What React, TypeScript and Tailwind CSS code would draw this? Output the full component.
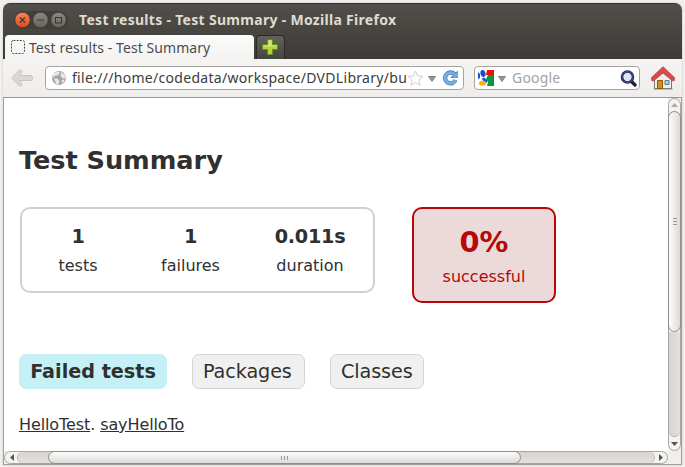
import React from 'react';

const UI = "font-['Noto_Sans',sans-serif]";

function Titlebar() {
  return (
    <div className="flex h-[31px] items-center pl-[11px]">
      <svg width="54" height="18" viewBox="0 0 54 18" className="shrink-0">
        <defs>
          <linearGradient id="close" x1="0" y1="0" x2="0" y2="1">
            <stop offset="0" stopColor="#f58763" />
            <stop offset="1" stopColor="#dd4814" />
          </linearGradient>
          <linearGradient id="btn" x1="0" y1="0" x2="0" y2="1">
            <stop offset="0" stopColor="#8b8981" />
            <stop offset="1" stopColor="#66645d" />
          </linearGradient>
        </defs>
        <rect width="54" height="18" rx="9" fill="#403f3a" />
        <circle cx="8.5" cy="9" r="7.7" fill="url(#close)" stroke="#3a3833" strokeWidth=".7" />
        <circle cx="26.5" cy="9" r="7.7" fill="url(#btn)" stroke="#3a3833" strokeWidth=".7" />
        <circle cx="44.5" cy="9" r="7.7" fill="url(#btn)" stroke="#3a3833" strokeWidth=".7" />
        <path d="M6 6.500l5 5M11 6.500l-5 5M23 9h7" stroke="#393733" strokeWidth="1.200" />
        <rect x="41.500" y="6.500" width="6" height="5.500" fill="none" stroke="#393733" />
      </svg>
      <div className={`${UI} ml-[11px] whitespace-nowrap text-[14px] font-bold leading-5 tracking-[0.3px] text-[#dfdbd2]`}>
        Test results - Test Summary - Mozilla Firefox
      </div>
    </div>
  );
}

function TabStrip() {
  return (
    <div className="flex h-[24px] items-end">
      <div className="ml-[2px] flex h-[24px] w-[249px] items-center rounded-t-[4px] bg-gradient-to-b from-[#fbfbfb] to-[#f4f3f2] pl-[6px] pt-px">
        <svg width="14" height="14" viewBox="0 0 14 14" className="mb-[2px] mr-[4px] shrink-0">
          <rect x=".5" y=".5" width="13" height="13" rx="2" fill="none" stroke="#4a4a4a" strokeDasharray="2 1.200" />
        </svg>
        <span className={`${UI} whitespace-nowrap text-[14px] leading-5 tracking-[0.07px] text-[#4c4c4c]`}>Test results - Test Summary</span>
      </div>
      <div className="ml-[2px] flex h-[24px] w-[29px] items-center justify-center rounded-t-[4px] border border-b-0 border-[#2b2a27] bg-gradient-to-b from-[#63615b] to-[#45443f] pb-[2px] pr-px">
        <svg width="16" height="16" viewBox="0 0 16 16">
          <path d="M5.500.5h5v5h5v5h-5v5h-5v-5h-5v-5h5z" fill="#b4d333" stroke="#5f9124" />
          <path d="M6.500 1.500h3v5h5v1h-13v-1h5z" fill="#d5e780" />
        </svg>
      </div>
    </div>
  );
}

function Caret() {
  return (
    <svg width="8" height="6" viewBox="0 0 8 6" className="shrink-0">
      <path d="M.5.5h7L4 5.500z" fill="#999" stroke="#707070" strokeWidth=".8" />
    </svg>
  );
}

function Toolbar() {
  return (
    <div className="flex h-[39px] items-center border-b border-[#99958f] bg-gradient-to-b from-[#f5f4f3] to-[#eeedeb] pl-[8px]">
      <svg width="22" height="18" viewBox="0 0 22 18" className="shrink-0">
        <path d="M8.300 1L.8 9l7.500 8 2.500-.8v-2L8 11.500h12.500c1.300-1 1.300-4 0-5H8l2.800-2.800v-2z" fill="#dad7d4" stroke="#c9c5c1" strokeLinejoin="round" />
      </svg>
      <div className="ml-[12px] flex h-[24px] w-[419px] shrink-0 items-center rounded-[4px] border border-[#a8a39d] bg-white pl-[5px]">
        <svg width="16" height="16" viewBox="0 0 16 16" className="shrink-0">
          <circle cx="8" cy="8" r="7" fill="#a5a5a5" />
          <path d="M2 4l4-2.400 3 1-2 2.800-3 .4L1.500 8zM10 2l4 3 1 3-3 .5L9.500 6zM3 8l4 1 1.500 2.500L7 15l-2-1.500zM10.500 10l3.500-.5-2.500 4.500z" fill="#e8e8e8" />
        </svg>
        <div className={`${UI} ml-[5px] w-[333px] shrink-0 whitespace-nowrap text-[14px] leading-5 tracking-[0.3px] text-[#3c3c3c]`}>
          file:///home/codedata/workspace/DVDLibrary/bu
        </div>
        <svg width="17" height="17" viewBox="0 0 17 17" className="ml-[2px] shrink-0">
          <path d="M8.500 1l2.100 5 5.400.4-4.100 3.500 1.300 5.400-4.700-2.900-4.700 2.900 1.300-5.400L1 6.400l5.400-.4z" fill="#fff" stroke="#cfcfcf" strokeLinejoin="round" />
        </svg>
        <div className="ml-[4px] flex pt-[2px]"><Caret /></div>
        <svg width="17" height="16" viewBox="0 0 17 16" className="ml-[6px] shrink-0">
          <path d="M12.500 4.300A5.400 5.400 0 1 0 13.500 10" fill="none" stroke="#4b88c4" strokeWidth="4.400" />
          <path d="M15.800.5v7.500H8z" fill="#4b88c4" />
          <path d="M12.500 4.300A5.400 5.400 0 1 0 13.500 10" fill="none" stroke="#78afe0" strokeWidth="2.700" />
          <path d="M15 2.500v4.700h-5z" fill="#78afe0" />
        </svg>
      </div>
      <div className="ml-[10px] flex h-[24px] w-[166px] shrink-0 items-center rounded-[4px] border border-[#a8a39d] bg-white pl-[3px]">
        <svg width="16" height="16" viewBox="0 0 16 16" className="shrink-0">
          <path d="M9 0h7v5H8z" fill="#f20c0c" />
          <path d="M10 5h6v11h-7l1-4-2-3z" fill="#0a963c" />
          <path d="M0 2l2 2v4l-2 1z" fill="#1552c4" />
          <ellipse cx="5" cy="3.500" rx="2.500" ry="3.500" fill="#1552c4" transform="rotate(-15 5 3.500)" />
          <path d="M4 8.500l2-1 3.500 3-1 2.500L4.500 10z" fill="#1552c4" />
          <ellipse cx="4.500" cy="13.300" rx="3.500" ry="2.500" fill="#f5b60a" />
        </svg>
        <div className="ml-[4px] flex pt-[2px]"><Caret /></div>
        <span className={`${UI} ml-[6px] w-[108px] text-[14px] leading-5 tracking-[0.2px] text-[#a3a3a3]`}>Google</span>
        <svg width="17" height="17" viewBox="0 0 17 17" className="shrink-0">
          <path d="M11 11l4 4" stroke="#252525" strokeWidth="3.500" strokeLinecap="round" />
          <circle cx="7.500" cy="7" r="5.500" fill="#dde5f3" stroke="#202860" strokeWidth="2.600" />
          <circle cx="7.500" cy="7" r="5.500" fill="none" stroke="#5261ad" strokeWidth=".7" />
        </svg>
      </div>
      <svg width="24" height="24" viewBox="0 0 24 24" className="ml-[11px] shrink-0">
        <path d="M3.500 11L12 3.500l8.500 7.500v11.500h-17z" fill="#eeeeec" stroke="#777" />
        <path d="M2.500 23h19" stroke="#888" />
        <path d="M6.500 14.500h5v8h-5z" fill="#d29022" stroke="#8f5902" />
        <path d="M14 14.500h4v4h-4z" fill="#b3cbe2" stroke="#667788" />
        <path d="M12 .7L.7 11.500v3l1.800.3L12 7l9.500 7.800 1.800-.3v-3z" fill="#d84b4b" stroke="#a93b3b" strokeWidth=".8" strokeLinejoin="round" />
      </svg>
    </div>
  );
}

function Metric({ value, label, width }: { value: string; label: string; width: string }) {
  return (
    <div className={`${width} text-center`}>
      <div className="text-[19.2px] font-bold leading-6 tracking-[-0.25px]">{value}</div>
      <div className="mt-[7px] text-[16px] leading-5">{label}</div>
    </div>
  );
}

function Report() {
  return (
    <div className="h-[353px] w-[664px] shrink-0 overflow-hidden bg-white pl-[15px] pt-[46px] font-['DejaVu_Sans',sans-serif] text-[#303030]">
      <h1 className="text-[25.6px] font-bold leading-8 tracking-[-0.05px]">Test Summary</h1>
      <div className="mt-[31px] flex items-start">
        <div className="ml-px flex h-[86px] w-[355px] rounded-[10px] border-2 border-[#d0d0d0] pt-[16px]">
          <Metric value="1" label="tests" width="w-[112px]" />
          <Metric value="1" label="failures" width="w-[113px]" />
          <Metric value="0.011s" label="duration" width="w-[126px]" />
        </div>
        <div className="ml-[37px] h-[96px] w-[144px] rounded-[10px] border-2 border-[#b60808] bg-[#ecdada] pt-[15px] text-center text-[#b60808]">
          <div className="text-[28.8px] font-bold leading-9">0%</div>
          <div className="mt-[7px] text-[16px] leading-5">successful</div>
        </div>
      </div>
      <div className="mt-[51px] flex gap-[25px] text-[19.2px] leading-[33px]">
        <div className="w-[148px] rounded-[7px] border border-[#c5f0f5] bg-[#c5f0f5] text-center font-bold">Failed tests</div>
        <div className="w-[113px] rounded-[7px] border border-[#d4d4d4] bg-[#f0f0f0] pl-[10px] tracking-[-0.1px]">Packages</div>
        <div className="w-[94px] rounded-[7px] border border-[#d4d4d4] bg-[#f0f0f0] pl-[10px] tracking-[-0.1px]">Classes</div>
      </div>
      <div className="mt-[26px] text-[16px] leading-5 tracking-[-0.1px]">
        <a className="underline">HelloTest</a>. <a className="underline">sayHelloTo</a>
      </div>
    </div>
  );
}

function VerticalScroll() {
  return (
    <div className="flex h-[353px] w-[13px] flex-col rounded-[7px] border border-[#aaa59f] bg-[#f4f3f2]">
      <div className="flex h-[12px] shrink-0 items-center justify-center">
        <svg width="7" height="4" viewBox="0 0 7 4"><path d="M0 4h7L3.500 0z" fill="#aaa" /></svg>
      </div>
      <div className="-mx-px flex h-[221px] shrink-0 items-center justify-center rounded-[7px] border border-[#918d88] bg-gradient-to-r from-[#fdfdfd] to-[#dddbd8]">
        <div className="flex flex-col gap-[2px]">
          <i className="h-px w-[4px] bg-[#999]" /><i className="h-px w-[4px] bg-[#999]" /><i className="h-px w-[4px] bg-[#999]" />
        </div>
      </div>
      <div className="-mt-[7px] h-[112px] shrink-0 rounded-b-[7px] border-b border-[#b7b2ad] bg-gradient-to-r from-[#d7d3d0] to-[#e3e1df] [clip-path:inset(7px_0_0_0)]" />
      <div className="flex h-[13px] items-center justify-center">
        <svg width="7" height="4" viewBox="0 0 7 4"><path d="M0 0h7L3.500 4z" fill="#555" /></svg>
      </div>
    </div>
  );
}

function HorizontalScroll() {
  return (
    <div className="flex h-[13px] w-[664px] rounded-[7px] border border-[#aaa59f] bg-[#f4f3f2]">
      <div className="flex w-[13px] shrink-0 items-center justify-center">
        <svg width="4" height="7" viewBox="0 0 4 7"><path d="M4 0v7L0 3.500z" fill="#555" /></svg>
      </div>
      <div className="flex flex-1 rounded-[6px] bg-gradient-to-b from-[#d7d3d0] to-[#e3e1df] shadow-[-1px_0_#b7b2ad,1px_0_#b7b2ad]">
        <div className="-my-px ml-[30px] flex w-[473px] items-center justify-center gap-[2px] rounded-[7px] border border-[#918d88] bg-gradient-to-b from-[#fdfdfd] to-[#dddbd8]">
          <i className="h-[4px] w-px bg-[#999]" /><i className="h-[4px] w-px bg-[#999]" /><i className="h-[4px] w-px bg-[#999]" />
        </div>
      </div>
      <div className="flex w-[13px] shrink-0 items-center justify-center">
        <svg width="4" height="7" viewBox="0 0 4 7"><path d="M0 0v7l4-3.500z" fill="#555" /></svg>
      </div>
    </div>
  );
}

export default function App() {
  return (
    <div className="h-[467px] w-[685px] overflow-hidden bg-[#f1f0ee] pl-[3px] pt-[3px]">
      <div className="h-[462px] w-[679px] overflow-hidden rounded-t-[7px] bg-[#f1efed] shadow-[0_0_2px_#8888]">
        <div className="h-[56px] border-t border-[#353430] bg-gradient-to-b from-[#504f49] to-[#3c3b37]">
          <Titlebar />
          <TabStrip />
        </div>
        <div className="h-[406px] border-x border-b border-[#a6a19b]">
          <div className="-mx-px"><Toolbar /></div>
          <div className="flex">
            <Report />
            <VerticalScroll />
          </div>
          <HorizontalScroll />
        </div>
      </div>
    </div>
  );
}
